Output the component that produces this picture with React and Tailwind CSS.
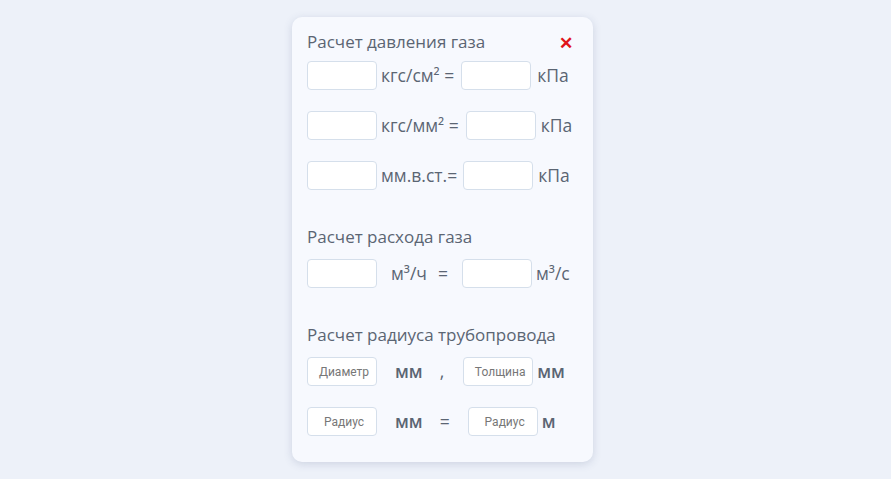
import React from 'react';

const font = { fontFamily: '"Open Sans", "Noto Sans", sans-serif' };

const Box = ({ placeholder, className = '' }) => (
  <input
    type="text"
    placeholder={placeholder}
    className={`w-[70px] h-[29px] rounded-[4px] border border-[#d5dfeb] bg-white pl-[10px] pr-[6px] text-center text-[12px] text-[#5b6573] placeholder:text-[#777] outline-none ${className}`}
    style={{ fontFamily: 'Roboto, "Liberation Sans", sans-serif' }}
  />
);

const Unit = ({ children, className = '' }) => (
  <span className={`text-[17.5px] leading-none text-[#5b6573] whitespace-pre ${className}`}>{children}</span>
);

export default function App() {
  return (
    <div className="min-h-[479px] w-full bg-[#edf1f9] flex justify-center pt-[17px] pr-[6px]" style={font}>
      <div className="w-[301px] h-[445px] rounded-[10px] bg-[#f7f9fe] shadow-[0_2px_8px_rgba(60,80,120,0.18)] pl-[15px] pr-[20px] pt-[12px]">
        <div className="flex items-center justify-between">
          <h2 className="text-[17px] text-[#5b6573] font-normal leading-[26px]">Расчет давления газа</h2>
          <span className="text-[#e0141a] text-[17px] font-bold leading-none mt-[1px]">✕</span>
        </div>

        <div className="mt-[6px] flex items-center">
          <Box />
          <Unit className="ml-[4px]">кгс/см² =</Unit>
          <Box className="ml-[7px]" />
          <Unit className="ml-[6px]">кПа</Unit>
        </div>
        <div className="mt-[21px] flex items-center">
          <Box />
          <Unit className="ml-[4px]">кгс/мм² =</Unit>
          <Box className="ml-[7px]" />
          <Unit className="ml-[5px]">кПа</Unit>
        </div>
        <div className="mt-[21px] flex items-center">
          <Box />
          <Unit className="ml-[4px]">мм.в.ст.=</Unit>
          <Box className="ml-[6px]" />
          <Unit className="ml-[5px]">кПа</Unit>
        </div>

        <h2 className="mt-[34px] text-[17px] text-[#5b6573] font-normal leading-[26px]">Расчет расхода газа</h2>
        <div className="mt-[9px] flex items-center">
          <Box />
          <Unit className="ml-[14px]">м³/ч</Unit>
          <Unit className="ml-[11px]">=</Unit>
          <Box className="ml-[14px]" />
          <Unit className="ml-[4px]">м³/с</Unit>
        </div>

        <h2 className="mt-[34px] text-[17px] text-[#5b6573] font-normal leading-[26px]">Расчет радиуса трубопровода</h2>
        <div className="mt-[9px] flex items-center">
          <Box placeholder="Диаметр" />
          <Unit className="ml-[18px] font-semibold text-[16px]">мм</Unit>
          <Unit className="ml-[17px]">,</Unit>
          <Box placeholder="Толщина" className="ml-[19px]" />
          <Unit className="ml-[4px] font-semibold text-[16px]">мм</Unit>
        </div>
        <div className="mt-[21px] flex items-center">
          <Box placeholder="Радиус" />
          <Unit className="ml-[18px] font-semibold text-[16px]">мм</Unit>
          <Unit className="ml-[17px]">=</Unit>
          <Box placeholder="Радиус" className="ml-[18px]" />
          <Unit className="ml-[4px] font-semibold text-[16px]">м</Unit>
        </div>
      </div>
    </div>
  );
}
